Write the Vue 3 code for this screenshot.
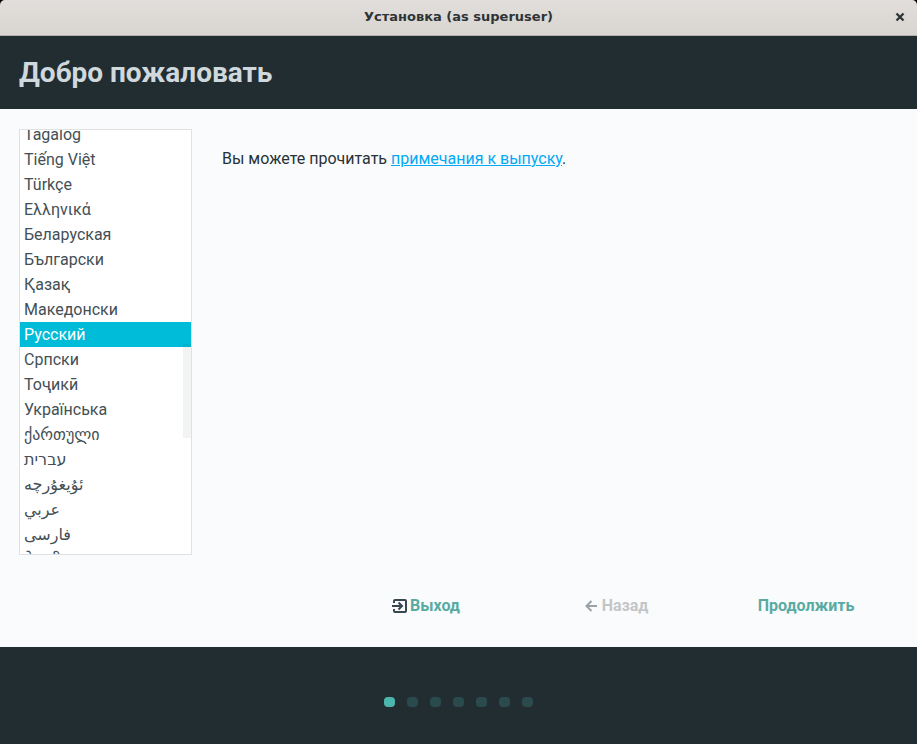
<script setup>
import { onMounted, ref } from 'vue'

const languages = [
  { code: 'tl', name: 'Tagalog' },
  { code: 'vi', name: 'Tiếng Việt' },
  { code: 'tr', name: 'Türkçe' },
  { code: 'el', name: 'Ελληνικά' },
  { code: 'be', name: 'Беларуская' },
  { code: 'bg', name: 'Български' },
  { code: 'kk', name: 'Қазақ' },
  { code: 'mk', name: 'Македонски' },
  { code: 'ru', name: 'Русский' },
  { code: 'sr', name: 'Српски' },
  { code: 'tg', name: 'Тоҷикӣ' },
  { code: 'uk', name: 'Українська' },
  { code: 'ka', name: 'ქართული' },
  { code: 'he', name: 'עברית' },
  { code: 'ug', name: 'ئۇيغۇرچە' },
  { code: 'ar', name: 'عربي' },
  { code: 'fa', name: 'فارسی' },
  { code: 'ne', name: 'नेपाली' },
]

const selected = ref('ru')
const list = ref(null)
const steps = 7
const step = 1

onMounted(() => {
  list.value.scrollTop = 8
})
</script>

<template>
  <div class="window">
    <header class="titlebar">
      <span class="caption">Установка (as superuser)</span>
      <button class="close" type="button" aria-label="Закрыть">
        <svg width="10" height="10" viewBox="0 0 10 10">
          <path d="M1.5 1.5 8.5 8.5M8.5 1.5 1.5 8.5" fill="none" stroke="#2e3436" stroke-width="2.3" />
        </svg>
      </button>
    </header>

    <div class="heading">
      <h1>Добро пожаловать</h1>
    </div>

    <main class="page">
      <div class="content">
        <div class="picker">
          <div ref="list" class="languages" role="radiogroup" aria-label="Язык">
            <label
              v-for="lang in languages"
              :key="lang.code"
              class="language"
              :class="{ active: lang.code === selected }"
            >
              <input v-model="selected" type="radio" name="language" :value="lang.code" />
              <bdi :lang="lang.code">{{ lang.name }}</bdi>
            </label>
          </div>
          <span class="thumb"></span>
        </div>
        <p class="notes">Вы можете прочитать <a href="#notes">примечания к выпуску</a>.</p>
      </div>

      <nav class="actions">
        <button class="action" type="button">
          <svg width="16" height="16" viewBox="0 0 16 16" fill="none" stroke="#37474f" stroke-width="2">
            <path d="M2 5V3Q2 2 3 2H13Q14 2 14 3V13Q14 14 13 14H3Q2 14 2 13V11" />
            <path d="M0 8H10M6.5 4.5 10 8 6.5 11.5" />
          </svg>
          <span>Выход</span>
        </button>
        <button class="action" type="button" disabled>
          <svg width="16" height="16" viewBox="0 0 16 16" fill="none" stroke="#9ba1a4" stroke-width="2">
            <path d="M13 8H3M7.5 3 2.5 8 7.5 13" />
          </svg>
          <span>Назад</span>
        </button>
        <button class="action" type="button"><span>Продолжить</span></button>
      </nav>
    </main>

    <footer class="progress">
      <span v-for="n in steps" :key="n" class="dot" :class="{ current: n === step }"></span>
    </footer>
  </div>
</template>

<style>
body {
  margin: 0;
  background: #000;
}
</style>

<style scoped>
.window {
  display: flex;
  flex-direction: column;
  min-height: 100vh;
  border-radius: 5px 5px 0 0;
  overflow: hidden;
  background: #222d32;
  color: #263238;
  font: 16px/25px Roboto, "DejaVu Sans", sans-serif;
}
.titlebar {
  display: grid;
  grid-template-columns: 1fr auto 1fr;
  align-items: center;
  box-sizing: border-box;
  height: 36px;
  padding: 0 12px 1px;
  border-bottom: 1px solid #b4b0ac;
  background: linear-gradient(#e1dedb, #d9d5d1);
}
.caption {
  grid-column: 2;
  color: #2e3436;
  font: bold 13px/20px "DejaVu Sans", sans-serif;
}
.close {
  display: flex;
  justify-self: end;
  padding: 0;
  border: 0;
  background: none;
}
.heading {
  padding: 19px 19px 18px;
}
h1 {
  margin: 0;
  color: #cfd8dc;
  font-size: 28px;
  line-height: 36px;
  font-weight: 700;
}
.page {
  display: flex;
  flex: 1;
  flex-direction: column;
  background: #fafbfd;
}
.content {
  display: flex;
  gap: 30px;
  padding: 20px 19px 0;
}
.picker {
  position: relative;
  box-sizing: border-box;
  width: 173px;
  border: 1px solid #dfe1e3;
  background: #fff;
}
.languages {
  height: 424px;
  overflow-y: scroll;
  scrollbar-width: none;
}
.language {
  display: block;
  height: 25px;
  padding: 0 4px;
  overflow: hidden;
  color: #434f55;
  white-space: nowrap;
}
.language input {
  position: absolute;
  appearance: none;
  margin: 0;
}
.language.active {
  background: #00bcd8;
  color: #fff;
}
.thumb {
  position: absolute;
  top: 214px;
  right: 0;
  width: 8px;
  height: 94px;
  background: rgba(38, 50, 56, 0.06);
  pointer-events: none;
}
.notes {
  margin: 17px 0 0;
}
.notes a {
  color: #03a9f4;
}
.actions {
  display: grid;
  grid-template-columns: repeat(3, 190px);
  justify-content: end;
  margin: auto 16px 29px;
}
.action {
  display: flex;
  align-items: center;
  justify-content: center;
  gap: 2px;
  padding: 0;
  border: 0;
  background: none;
  color: #58aba2;
  font: bold 16px/25px Roboto, sans-serif;
}
.action:disabled {
  color: #c3c6c8;
}
.progress {
  display: flex;
  justify-content: center;
  gap: 12px;
  padding: 50px 0 37px;
}
.dot {
  width: 11px;
  height: 10px;
  border-radius: 4px;
  background: #2b4a4d;
}
.dot.current {
  background: #4db6ac;
}
</style>
